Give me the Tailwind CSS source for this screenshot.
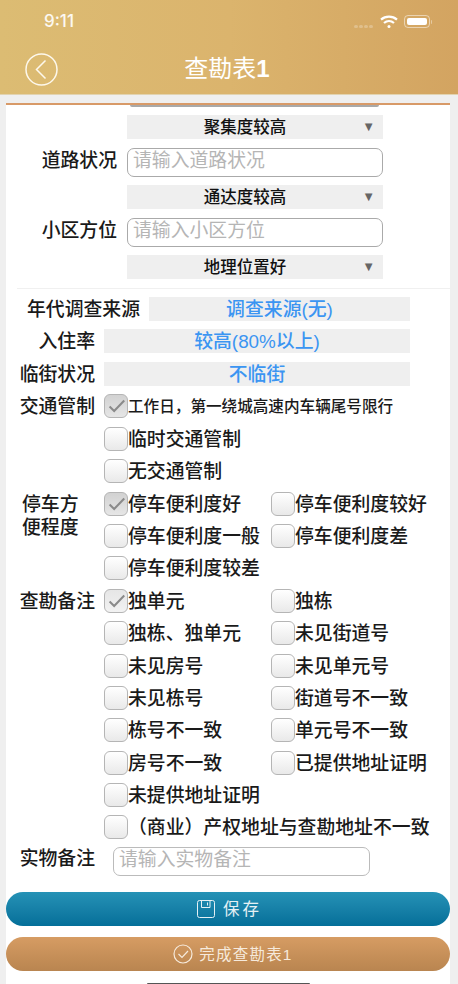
<!DOCTYPE html>
<html lang="zh-CN">
<head>
<meta charset="utf-8">
<title>查勘表1</title>
<script src="https://cdn.jsdelivr.net/npm/@tailwindcss/browser@4"></script>
</head>
<body class="relative w-[458px] h-[984px] overflow-hidden bg-[#efefef] font-['Liberation_Sans','Noto_Sans_CJK_SC',sans-serif] text-[#1a1a1a]">

<header class="h-[95px] bg-gradient-to-r from-[#dcbc73] via-[#dbb46d] to-[#d3a461] text-white border-b border-[#e2d3b0]">
  <div class="h-[42px] flex items-center pl-[44px] pr-[26px] pt-[1px]">
    <span class="text-[17px] font-['Inter'] font-medium text-white/90 leading-none">9:11</span>
    <div class="ml-auto flex items-center">
      <div class="flex gap-[1.5px] mt-[10px] mr-[7px]">
        <span class="w-[3.5px] h-[3.5px] rounded-full bg-white/25"></span><span class="w-[3.5px] h-[3.5px] rounded-full bg-white/25"></span><span class="w-[3.5px] h-[3.5px] rounded-full bg-white/25"></span><span class="w-[3.5px] h-[3.5px] rounded-full bg-white/25"></span>
      </div>
      <svg class="w-[18px] h-[14px] mr-[6px]" viewBox="0 0 18 14" fill="none" stroke="white" stroke-width="2.2"><path d="M1 4.6C5.5 .6 12.5 .6 17 4.6"/><path d="M4 8C7 5.4 11 5.4 14 8"/><circle cx="9" cy="11.6" r="1.5" fill="white" stroke="none"/></svg>
      <div class="w-[26px] h-[13px] rounded-[4px] border border-white/50 p-[2px]"><div class="w-full h-full rounded-[2px] bg-white"></div></div>
      <div class="w-[1.5px] h-[4px] ml-[1px] bg-white/40 rounded-r"></div>
    </div>
  </div>
  <div class="relative h-[52px] flex items-center justify-center pr-[4px] pt-[3px]">
    <svg class="absolute left-[24px] top-[10px] w-[35px] h-[35px]" viewBox="0 0 35 35" fill="none" stroke="#fdf8ec" stroke-width="1.5"><circle cx="17.5" cy="17.5" r="15.5"/><path d="M21.5 8.5L12.5 17.5L21.5 26.5"/></svg>
    <h1 class="text-[24px] font-normal leading-none tracking-normal pb-[2px]">查勘表<span class="font-bold">1</span></h1>
  </div>
</header>

<main class="ml-[6px] w-[444px] mt-[8px] h-[881px] bg-white">
  <div class="border-t-2 border-[#d89a68]"></div>
  <div class="ml-[124px] w-[249px] h-[2px] bg-[#a9a9a9] rounded-b"></div>

  <section class="mt-[8px] pb-[9px] border-b border-[#f0f0f0] ml-[11px]">
    <div class="flex flex-col gap-[8px] ml-[110px] w-[256px]">
      <div class="h-[24px] bg-[#efefef] relative flex items-center justify-center pr-[20px] text-[16.5px] font-medium text-[#111]">聚集度较高<span class="absolute right-[8px] text-[13px] text-[#666]">▼</span></div>
      <div class="relative mt-[1px]">
        <span class="absolute right-[266px] top-[1px] whitespace-nowrap text-[18.85px] font-medium leading-[24px]">道路状况</span>
        <div class="h-[29px] border border-[#aaa] rounded-[7px] pl-[5px] text-[18.85px] leading-[23px] text-[#b5b5b5]">请输入道路状况</div>
      </div>
      <div class="h-[24px] bg-[#efefef] relative flex items-center justify-center pr-[20px] text-[16.5px] font-medium text-[#111]">通达度较高<span class="absolute right-[8px] text-[13px] text-[#666]">▼</span></div>
      <div class="relative mt-[1px]">
        <span class="absolute right-[266px] top-[1px] whitespace-nowrap text-[18.85px] font-medium leading-[24px]">小区方位</span>
        <div class="h-[29px] border border-[#aaa] rounded-[7px] pl-[5px] text-[18.85px] leading-[23px] text-[#b5b5b5]">请输入小区方位</div>
      </div>
      <div class="h-[24px] bg-[#efefef] relative flex items-center justify-center pr-[20px] text-[16.5px] font-medium text-[#111]">地理位置好<span class="absolute right-[8px] text-[13px] text-[#666]">▼</span></div>
    </div>
  </section>

  <section class="mt-[8px] flex flex-col gap-[8.4px] pr-[40px]">
    <div class="flex h-[24px] items-center">
      <span class="ml-[21px] w-[122px] shrink-0 text-[18.85px] font-medium whitespace-nowrap pt-[2px]">年代调查来源</span>
      <div class="flex-1 h-full bg-[#efefef] flex items-center justify-center pt-[2px] text-[18.85px] font-medium text-[#3b95f2]">调查来源(无)</div>
    </div>
    <div class="flex h-[24px] items-center">
      <span class="w-[89px] shrink-0 text-right text-[18.85px] font-medium whitespace-nowrap pt-[2px]">入住率</span>
      <div class="ml-[9px] flex-1 h-full bg-[#efefef] flex items-center justify-center pt-[2px] text-[18.85px] font-medium text-[#3b95f2]">较高(80%以上)</div>
    </div>
    <div class="flex h-[24px] items-center">
      <span class="w-[89px] shrink-0 text-right text-[18.85px] font-medium whitespace-nowrap pt-[2px]">临街状况</span>
      <div class="ml-[9px] flex-1 h-full bg-[#efefef] flex items-center justify-center pt-[2px] text-[18.85px] font-medium text-[#3b95f2]">不临街</div>
    </div>
  </section>

  <section class="mt-[8.6px] grid grid-cols-[98px_167px_1fr] auto-rows-[24px] gap-y-[8.4px] text-[18.85px] font-medium leading-[26px] whitespace-nowrap">
    <div class="text-right pr-[9px]">交通管制</div>
    <label class="col-span-2 flex items-start text-[15.6px]">
      <span class="w-[24px] h-[24px] shrink-0 rounded-[6px] border border-[#b5b5b5] bg-gradient-to-b from-[#d2d2d2] to-[#e6e6e6]"><svg viewBox="0 0 24 24" fill="none" stroke="#8a8a8a" stroke-width="2.2"><path d="M5 12.5L10 17.5L21 6"/></svg></span>工作日，第一绕城高速内车辆尾号限行
    </label>
    <label class="col-start-2 col-span-2 flex items-start"><span class="w-[24px] h-[24px] shrink-0 rounded-[6px] border border-[#b5b5b5] bg-gradient-to-b from-white to-[#e9e9e9]"></span>临时交通管制</label>
    <label class="col-start-2 col-span-2 flex items-start"><span class="w-[24px] h-[24px] shrink-0 rounded-[6px] border border-[#b5b5b5] bg-gradient-to-b from-white to-[#e9e9e9]"></span>无交通管制</label>

    <div class="row-span-2 pl-[16px] leading-[23px] pt-[1px]">停车方<br>便程度</div>
    <label class="flex items-start"><span class="w-[24px] h-[24px] shrink-0 rounded-[6px] border border-[#b5b5b5] bg-gradient-to-b from-[#d2d2d2] to-[#e6e6e6]"><svg viewBox="0 0 24 24" fill="none" stroke="#8a8a8a" stroke-width="2.2"><path d="M5 12.5L10 17.5L21 6"/></svg></span>停车便利度好</label>
    <label class="flex items-start"><span class="w-[24px] h-[24px] shrink-0 rounded-[6px] border border-[#b5b5b5] bg-gradient-to-b from-white to-[#e9e9e9]"></span>停车便利度较好</label>
    <label class="flex items-start"><span class="w-[24px] h-[24px] shrink-0 rounded-[6px] border border-[#b5b5b5] bg-gradient-to-b from-white to-[#e9e9e9]"></span>停车便利度一般</label>
    <label class="flex items-start"><span class="w-[24px] h-[24px] shrink-0 rounded-[6px] border border-[#b5b5b5] bg-gradient-to-b from-white to-[#e9e9e9]"></span>停车便利度差</label>
    <label class="col-start-2 col-span-2 flex items-start"><span class="w-[24px] h-[24px] shrink-0 rounded-[6px] border border-[#b5b5b5] bg-gradient-to-b from-white to-[#e9e9e9]"></span>停车便利度较差</label>

    <div class="text-right pr-[9px]">查勘备注</div>
    <label class="flex items-start"><span class="w-[24px] h-[24px] shrink-0 rounded-[6px] border border-[#b5b5b5] bg-gradient-to-b from-[#e6e6e6] to-[#f2f2f2]"><svg viewBox="0 0 24 24" fill="none" stroke="#8a8a8a" stroke-width="2.2"><path d="M5 12.5L10 17.5L21 6"/></svg></span>独单元</label>
    <label class="flex items-start"><span class="w-[24px] h-[24px] shrink-0 rounded-[6px] border border-[#b5b5b5] bg-gradient-to-b from-white to-[#e9e9e9]"></span>独栋</label>
    <label class="col-start-2 flex items-start"><span class="w-[24px] h-[24px] shrink-0 rounded-[6px] border border-[#b5b5b5] bg-gradient-to-b from-white to-[#e9e9e9]"></span>独栋、独单元</label>
    <label class="flex items-start"><span class="w-[24px] h-[24px] shrink-0 rounded-[6px] border border-[#b5b5b5] bg-gradient-to-b from-white to-[#e9e9e9]"></span>未见街道号</label>
    <label class="col-start-2 flex items-start"><span class="w-[24px] h-[24px] shrink-0 rounded-[6px] border border-[#b5b5b5] bg-gradient-to-b from-white to-[#e9e9e9]"></span>未见房号</label>
    <label class="flex items-start"><span class="w-[24px] h-[24px] shrink-0 rounded-[6px] border border-[#b5b5b5] bg-gradient-to-b from-white to-[#e9e9e9]"></span>未见单元号</label>
    <label class="col-start-2 flex items-start"><span class="w-[24px] h-[24px] shrink-0 rounded-[6px] border border-[#b5b5b5] bg-gradient-to-b from-white to-[#e9e9e9]"></span>未见栋号</label>
    <label class="flex items-start"><span class="w-[24px] h-[24px] shrink-0 rounded-[6px] border border-[#b5b5b5] bg-gradient-to-b from-white to-[#e9e9e9]"></span>街道号不一致</label>
    <label class="col-start-2 flex items-start"><span class="w-[24px] h-[24px] shrink-0 rounded-[6px] border border-[#b5b5b5] bg-gradient-to-b from-white to-[#e9e9e9]"></span>栋号不一致</label>
    <label class="flex items-start"><span class="w-[24px] h-[24px] shrink-0 rounded-[6px] border border-[#b5b5b5] bg-gradient-to-b from-white to-[#e9e9e9]"></span>单元号不一致</label>
    <label class="col-start-2 flex items-start"><span class="w-[24px] h-[24px] shrink-0 rounded-[6px] border border-[#b5b5b5] bg-gradient-to-b from-white to-[#e9e9e9]"></span>房号不一致</label>
    <label class="flex items-start"><span class="w-[24px] h-[24px] shrink-0 rounded-[6px] border border-[#b5b5b5] bg-gradient-to-b from-white to-[#e9e9e9]"></span>已提供地址证明</label>
    <label class="col-start-2 col-span-2 flex items-start"><span class="w-[24px] h-[24px] shrink-0 rounded-[6px] border border-[#b5b5b5] bg-gradient-to-b from-white to-[#e9e9e9]"></span>未提供地址证明</label>
    <label class="col-start-2 col-span-2 flex items-start"><span class="w-[24px] h-[24px] shrink-0 rounded-[6px] border border-[#b5b5b5] bg-gradient-to-b from-white to-[#e9e9e9]"></span>（商业）产权地址与查勘地址不一致</label>
  </section>

  <section class="mt-[8px] flex items-start">
    <span class="w-[89px] shrink-0 text-right text-[18.85px] font-medium leading-[24px]">实物备注</span>
    <div class="ml-[18px] w-[257px] h-[29px] border border-[#bbb] rounded-[7px] pl-[5px] text-[18.85px] leading-[23px] text-[#b5b5b5]">请输入实物备注</div>
  </section>

  <button class="mt-[16px] w-full h-[34px] rounded-full bg-gradient-to-b from-[#2592b6] to-[#046f99] text-[#e4f1f5] flex items-center justify-center pl-[3px] text-[16.5px] tracking-[3px]">
    <svg class="w-[18px] h-[18px] mr-[8px]" viewBox="0 0 18 18" fill="none" stroke="#e4f1f5" stroke-width="1"><rect x=".5" y=".5" width="17" height="17" rx="2"/><path d="M4.5 .5V7.5H13V.5M10.5 2.5V5.5"/></svg>保存
  </button>
  <button class="mt-[11px] w-full h-[34px] rounded-full bg-gradient-to-b from-[#d69c63] to-[#b98550] text-[#f6eadc] flex items-center justify-center pl-[10px] text-[15.5px] tracking-[1.2px]">
    <svg class="w-[20px] h-[20px] mr-[6px]" viewBox="0 0 20 20" fill="none" stroke="#f6eadc" stroke-width="1.2"><circle cx="10" cy="10" r="9"/><path d="M5.5 10L9 13.5L15 7"/></svg>完成查勘表1
  </button>
</main>

<div class="absolute left-[147px] bottom-0 w-[163px] h-[1.5px] rounded-t bg-[#555]"></div>
</body>
</html>
